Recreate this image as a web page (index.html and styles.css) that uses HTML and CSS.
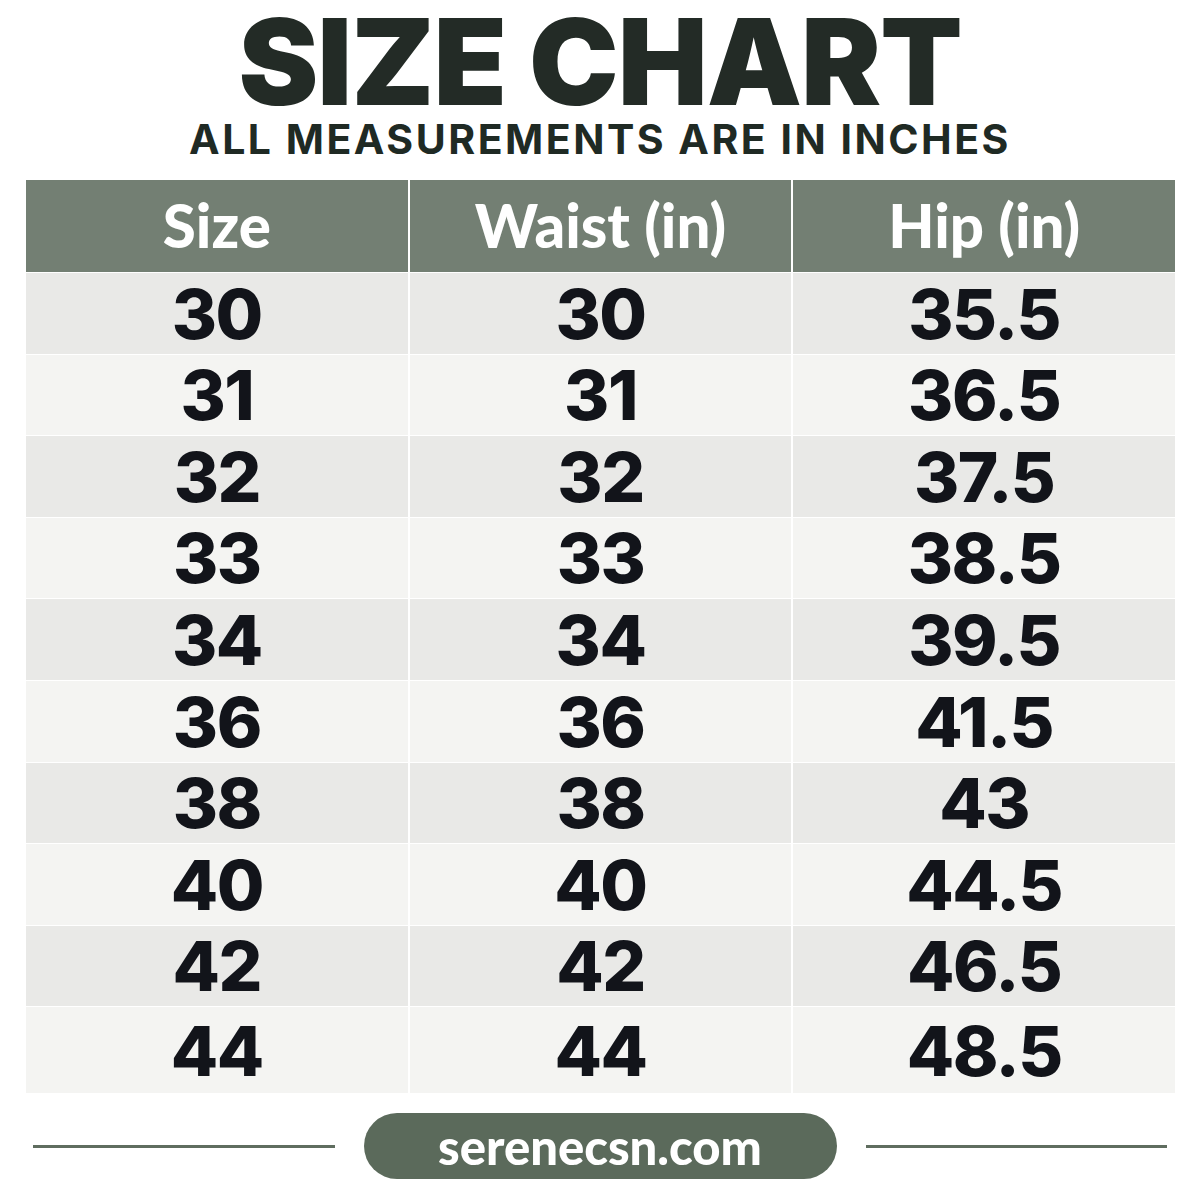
FILE: index.html
```html
<!DOCTYPE html>
<html>
<head>
<meta charset="utf-8">
<link rel="stylesheet" href="styles.css">
</head>
<body>
<div class="page">
  <h1 class="title">SIZE CHART</h1>
  <p class="subtitle">ALL MEASUREMENTS ARE IN INCHES</p>
  <div class="table">
    <div class="row head"><div class="cell">Size</div><div class="cell">Waist (in)</div><div class="cell">Hip (in)</div></div>
    <div class="row odd"><div class="cell">30</div><div class="cell">30</div><div class="cell">35.5</div></div>
    <div class="row even"><div class="cell">31</div><div class="cell">31</div><div class="cell">36.5</div></div>
    <div class="row odd"><div class="cell">32</div><div class="cell">32</div><div class="cell">37.5</div></div>
    <div class="row even"><div class="cell">33</div><div class="cell">33</div><div class="cell">38.5</div></div>
    <div class="row odd"><div class="cell">34</div><div class="cell">34</div><div class="cell">39.5</div></div>
    <div class="row even"><div class="cell">36</div><div class="cell">36</div><div class="cell">41.5</div></div>
    <div class="row odd"><div class="cell">38</div><div class="cell">38</div><div class="cell">43</div></div>
    <div class="row even"><div class="cell">40</div><div class="cell">40</div><div class="cell">44.5</div></div>
    <div class="row odd"><div class="cell">42</div><div class="cell">42</div><div class="cell">46.5</div></div>
    <div class="row even last"><div class="cell">44</div><div class="cell">44</div><div class="cell">48.5</div></div>
  </div>
  <div class="footer">
    <span class="rule"></span>
    <span class="pill">serenecsn.com</span>
    <span class="rule"></span>
  </div>
</div>
</body>
</html>
```

FILE: styles.css
```css
html, body {
  margin: 0;
  padding: 0;
  background: #ffffff;
}
.page {
  width: 1200px;
  height: 1200px;
  overflow: hidden;
  display: flex;
  flex-direction: column;
  align-items: stretch;
}
.title {
  margin: 2px 0 0 0;
  text-align: center;
  font-family: Inter, "Liberation Sans", sans-serif;
  font-weight: 900;
  font-size: 120px;
  line-height: 120px;
  letter-spacing: -1px;
  color: #232b26;
}
.subtitle {
  margin: 0;
  text-align: center;
  font-family: Inter, "Liberation Sans", sans-serif;
  font-weight: 700;
  font-size: 41px;
  line-height: 34px;
  letter-spacing: 2.5px;
  color: #1f2a24;
}
.table {
  margin: 24px 25px 0 26px;
  display: flex;
  flex-direction: column;
  gap: 1px;
  background: #ffffff;
}
.row {
  display: grid;
  grid-template-columns: 1fr 1fr 1fr;
  grid-template-rows: 100%;
  column-gap: 2px;
  height: 80.6px;
}
.row.head {
  height: 92px;
}
.row.last {
  height: 86px;
}
.cell {
  display: flex;
  align-items: center;
  justify-content: center;
  padding-top: 2px;
  box-sizing: border-box;
  font-family: Inter, "Liberation Sans", sans-serif;
  font-weight: 800;
  font-size: 69px;
  line-height: 1.12;
  letter-spacing: -1.5px;
  color: #12141a;
}
.head .cell {
  padding-top: 0;
  padding-bottom: 2px;
  background: #737f73;
  color: #ffffff;
  font-family: Lato, "Liberation Sans", sans-serif;
  font-weight: 900;
  font-size: 60px;
  line-height: 1.2;
  letter-spacing: 0;
}
.odd .cell {
  background: #e9e9e7;
}
.even .cell {
  background: #f4f4f2;
}
.footer {
  margin-top: 20px;
  display: flex;
  align-items: center;
  padding: 0 33px;
}
.rule {
  flex: 1;
  height: 3px;
  background: #5f6d5f;
}
.pill {
  margin: 0 29px;
  width: 473px;
  height: 66px;
  border-radius: 33px;
  background: #5b6a5b;
  color: #ffffff;
  display: flex;
  align-items: center;
  justify-content: center;
  font-family: Lato, "Liberation Sans", sans-serif;
  font-weight: 900;
  font-size: 49px;
}
```
